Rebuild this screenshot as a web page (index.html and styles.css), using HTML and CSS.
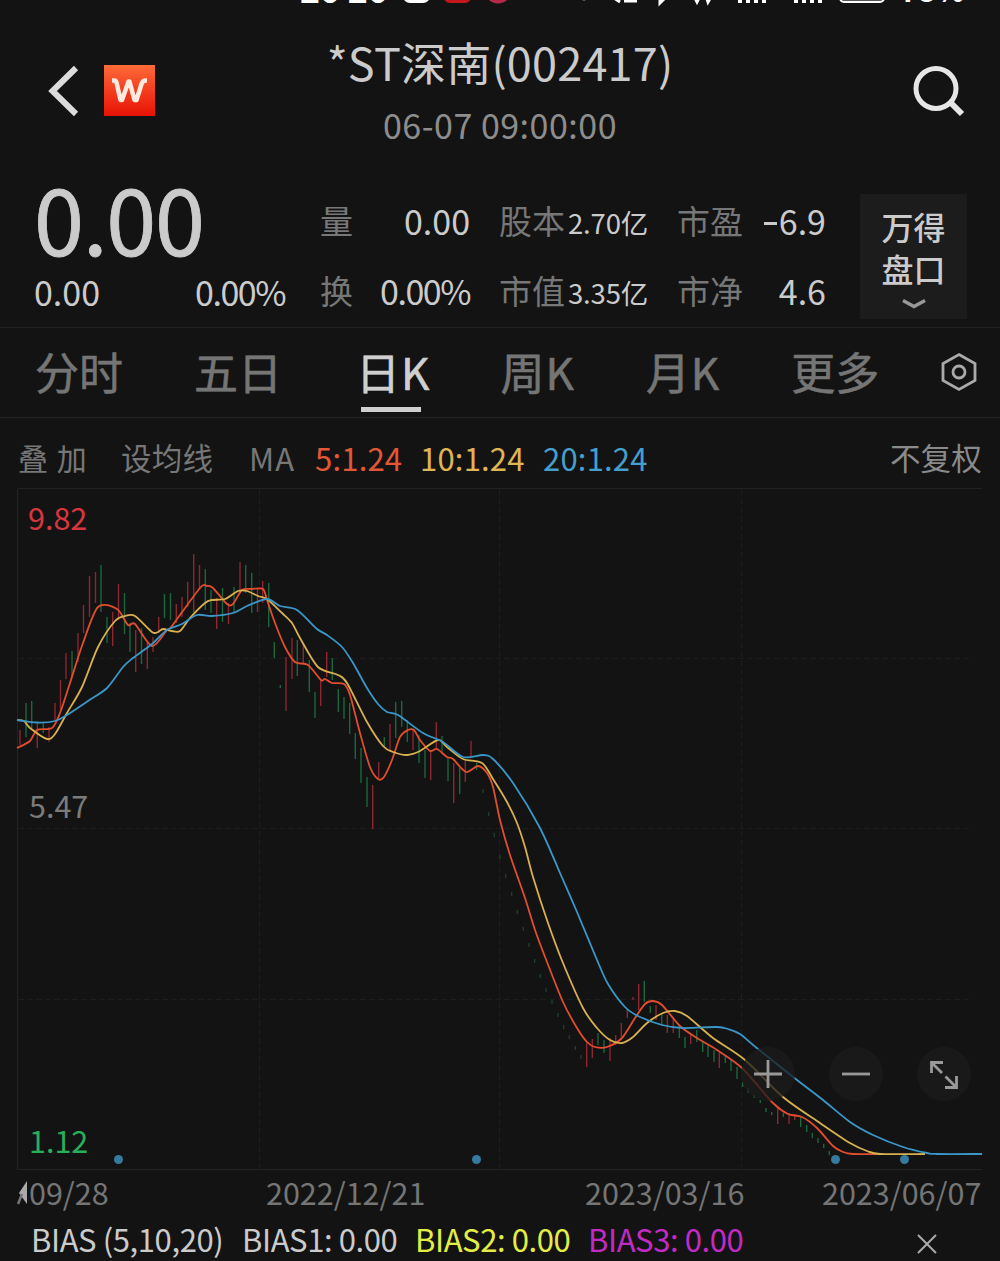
FILE: index.html
```html
<!DOCTYPE html>
<html lang="zh-CN">
<head>
  <meta charset="UTF-8" />
  <meta name="viewport" content="width=device-width, initial-scale=1.0"/>
  <title>*ST深南(002417)</title>
  <link rel="stylesheet" href="styles.css">
</head>
<body>

<div class="status-bar">
  <span class="status-time">20 20</span>
  <svg class="status-icons" width="500" height="8" viewBox="400 0 500 8">
    <rect x="403" y="-16" width="27" height="19" rx="7" fill="#fff"/>
    <rect x="444" y="-16" width="27" height="19" rx="6" fill="#c4161c"/>
    <circle cx="498" cy="-10" r="13.5" fill="#b52a4a"/>
    <circle cx="584" cy="-4" r="4.5" fill="#bbb"/>
    <path d="M614-2l6 4M624 1h13M660-4v7l6-6M694-4l3 6 3-6M706-4l2 6 4-7" fill="none" stroke="#fff" stroke-width="3"/>
    <path d="M740-5v8M748-5v8M756-5v8M764-5v8M796-5v8M804-5v8M812-5v8M820-5v8" stroke="#fff" stroke-width="4"/>
    <rect x="840" y="-16" width="44" height="18" rx="4" fill="#555" stroke="#fff" stroke-width="2"/>
  </svg>
  <span class="status-battery">78%</span>
</div>

<div class="header">
  <div class="header-left">
    <svg class="back" width="32" height="52" viewBox="0 0 32 52"><path d="M28 3L4.500 26 28 49" fill="none" stroke="#dcdcdc" stroke-width="6"/></svg>
    <div class="logo"><svg width="51" height="51" viewBox="0 0 51 51"><path d="M8 15.500h2.500q1.500 0 2 2l4 17.500h1.500l6.500-18.500h1l5 18.500h2l5-16q1-3.500 4.500-3.500h1" fill="none" stroke="#ffeadf" stroke-width="4.500" stroke-linejoin="round"/></svg></div>
  </div>
  <div class="header-title">
    <h1>*ST深南(002417)</h1>
    <div class="time">06-07 09:00:00</div>
  </div>
  <svg class="search" width="54" height="54" viewBox="0 0 54 54"><g fill="none" stroke="#e6e6e6"><circle cx="24" cy="23.500" r="20" stroke-width="5"/><path d="M38 37l12 12" stroke-width="6"/></g></svg>
</div>

<div class="quote">
  <div class="price">
    <div class="price-now">0.00</div>
    <div class="price-change"><span>0.00</span><span class="percent">0.00%</span></div>
  </div>
  <div class="stats">
    <div class="stat stat-a"><span class="label">量</span><span>0.00</span></div>
    <div class="stat stat-b"><span class="label">股本</span><span class="small">2.70亿</span></div>
    <div class="stat stat-c"><span class="label">市盈</span><span><i class="minus"></i>6.9</span></div>
    <div class="stat stat-a"><span class="label">换</span><span class="percent">0.00%</span></div>
    <div class="stat stat-b"><span class="label">市值</span><span class="small">3.35亿</span></div>
    <div class="stat stat-c"><span class="label">市净</span><span>4.6</span></div>
  </div>
  <div class="depth">
    <span>万得</span>
    <span>盘口</span>
    <svg width="26" height="12" viewBox="0 0 26 12"><path d="M2 2.500l11 6 11-6" fill="none" stroke="#999" stroke-width="3.500"/></svg>
  </div>
</div>

<div class="tabs">
  <span class="tab">分时</span>
  <span class="tab">五日</span>
  <span class="tab tab-k active">日K</span>
  <span class="tab tab-k">周K</span>
  <span class="tab tab-k">月K</span>
  <span class="tab">更多</span>
  <svg class="gear" width="36" height="40" viewBox="0 0 36 40"><g fill="none" stroke="#aaa" stroke-width="2.800"><path d="M18 2.500l16 9v17l-16 9-16-9v-17z"/><circle cx="18" cy="20" r="6"/></g></svg>
</div>

<div class="ma-row">
  <span class="overlay">叠 加</span>
  <span class="set-ma">设均线</span>
  <span class="ma">MA</span>
  <span class="ma5">5:1.24</span>
  <span class="ma10">10:1.24</span>
  <span class="ma20">20:1.24</span>
  <span class="adjust">不复权</span>
</div>

<div class="chart">
  <svg id="kline" width="1000" height="683" viewBox="0 488 1000 683">
    <g class="grid">
      <path class="frame" d="M982 488.500H17.500V1169.500H982"/>
      <path d="M259.500 489V1169M499.500 489V1169M741.500 489V1169M18 658.500H972M18 828.500H972M18 999.500H972"/>
    </g>
    <g id="candles"></g>
    <g id="lines"></g>
    <g fill="#347b9f">
      <circle cx="118.500" cy="1159.500" r="4.500"/>
      <circle cx="476.500" cy="1159.500" r="4.500"/>
      <circle cx="835.500" cy="1159.500" r="4.500"/>
      <circle cx="904.500" cy="1159.500" r="4.500"/>
    </g>
    <g class="axis">
      <text x="28" y="530" fill="#d8363f">9.82</text>
      <text x="29" y="818" fill="#7b7b7b">5.47</text>
      <text x="29" y="1153" fill="#29ae5b">1.12</text>
    </g>
  </svg>
  <div class="zoom-buttons">
    <div class="zoom-btn"><svg width="54" height="54" viewBox="0 0 54 54"><path d="M13 27h28M27 13v28"/></svg></div>
    <div class="zoom-btn"><svg width="54" height="54" viewBox="0 0 54 54"><path d="M13 27h28"/></svg></div>
    <div class="zoom-btn"><svg width="54" height="54" viewBox="0 0 54 54"><path d="M14.500 26V15.500H26M15 16L25 26M28.500 29.500L39 40M39.500 29v11.500H28"/></svg></div>
  </div>
</div>

<div class="dates">
  <span class="date-first">09/28<svg width="12" height="24" viewBox="0 0 12 24"><path d="M10 0v23L2 12z" fill="#aaa"/><path d="M1 23l4-10" stroke="#777" stroke-width="2.500"/></svg></span>
  <span class="date-second">2022/12/21</span>
  <span class="date-third">2023/03/16</span>
  <span>2023/06/07</span>
</div>

<div class="bias">
  <span class="bias-name">BIAS (5,10,20)</span>
  <span>BIAS1: 0.00</span>
  <span class="bias2">BIAS2: 0.00</span>
  <span class="bias3">BIAS3: 0.00</span>
  <svg width="20" height="20" viewBox="0 0 20 20"><path d="M1 1l18 18M19 1L1 19" stroke="#aaa" stroke-width="2"/></svg>
</div>

<script src="script.js"></script>
</body>
</html>
```
FILE: styles.css
```css
html, body {
  margin: 0;
  padding: 0;
  background: #131313;
  color: #cbcbcb;
  font-family: 'Noto Sans CJK SC', sans-serif;
}

body {
  width: 1000px;
  height: 1261px;
  overflow: hidden;
}

span, h1 {
  white-space: nowrap;
}

svg {
  display: block;
  flex: none;
}

/* status bar, scrolled almost out of view */
.status-bar {
  display: flex;
  height: 8px;
  padding-left: 300px;
  overflow: hidden;
  color: #fff;
  font-size: 34px;
  font-weight: 700;
  line-height: 34px;
}

.status-bar span {
  margin-top: -28px;
}

.status-time {
  width: 100px;
}

.status-battery {
  font-size: 30px;
}

.header {
  display: flex;
  height: 157px;
}

.header-left {
  display: flex;
  width: 232px;
  padding: 57px 0 0 48px;
}

.back {
  margin-right: 24px;
}

.logo {
  width: 51px;
  height: 51px;
  background: linear-gradient(#ff6a38, #e81206);
}

.header-title {
  width: 440px;
  text-align: center;
}

h1 {
  margin: 21px 0 0;
  font-size: 45px;
  font-weight: 400;
  line-height: 66px;
  letter-spacing: 0.2px;
}

.time {
  margin-top: 5px;
  color: #8d8d8d;
  font-size: 34px;
  line-height: 50px;
  letter-spacing: 0.5px;
}

.search {
  margin: 57px 34px 0 auto;
}

.quote {
  display: flex;
  height: 162px;
  border-bottom: 1px solid #222;
}

.price {
  width: 251px;
  padding-left: 34px;
}

.price-now {
  height: 103px;
  font-size: 90px;
  line-height: 105px;
  letter-spacing: -1.3px;
  -webkit-text-stroke: 0.8px;
}

.price-change {
  display: flex;
  justify-content: space-between;
  font-size: 34px;
  line-height: 47px;
}

.percent {
  letter-spacing: -1.5px;
}

.stats {
  display: grid;
  grid-template-columns: 150px 149px 149px;
  grid-template-rows: 70px 70px;
  column-gap: 29px;
  width: 506px;
  margin: 20px 0 0 35px;
}

.stat {
  display: flex;
  justify-content: space-between;
  font-size: 34px;
  line-height: 72px;
}

.label {
  color: #777;
  font-size: 33px;
  line-height: 70px;
}

.stat .small {
  font-size: 27.5px;
  line-height: 75px;
  letter-spacing: -0.2px;
}

.minus {
  display: inline-block;
  width: 13px;
  height: 3px;
  margin-right: 2px;
  background: #cbcbcb;
  vertical-align: 10px;
}

.depth {
  display: flex;
  flex-direction: column;
  align-items: center;
  width: 107px;
  height: 114px;
  margin: 29px 0 0 34px;
  padding-top: 11px;
  background: #1c1c1c;
  font-size: 32px;
  font-weight: 500;
  line-height: 42px;
}

.depth svg {
  margin-top: 9px;
}

.tabs {
  display: flex;
  height: 89px;
  padding-left: 35px;
  border-bottom: 1px solid #222;
  color: #757575;
  font-size: 44px;
  line-height: 87px;
  -webkit-text-stroke: 0.6px;
}

.tab {
  position: relative;
  margin-right: 71px;
}

.tab-k {
  letter-spacing: 1px;
}

.tab.active {
  margin: 0 70px 0 3px;
  color: #cfcfcf;
}

.tab.active::after {
  content: "";
  position: absolute;
  left: 5px;
  bottom: 5px;
  width: 60px;
  height: 5px;
  background: #cfcfcf;
}

.gear {
  margin: 24px 0 0 -9px;
}

.ma-row {
  display: flex;
  height: 70px;
  padding: 0 18px;
  color: #777;
  font-size: 31px;
  line-height: 79px;
  letter-spacing: 0.2px;
}

.overlay {
  width: 103px;
  font-size: 30px;
  letter-spacing: 1px;
}

.set-ma {
  width: 128px;
  font-size: 30.5px;
}

.ma {
  width: 66px;
  letter-spacing: 1px;
}

.ma5 {
  width: 105px;
  color: #e25836;
}

.ma10 {
  width: 123px;
  color: #e0b554;
}

.ma20 {
  color: #459fcc;
}

.adjust {
  margin-left: auto;
  color: #8a8a8a;
  font-size: 30.5px;
}

.chart {
  position: relative;
  height: 683px;
}

.grid path {
  fill: none;
  stroke: #1d1d1d;
  stroke-dasharray: 6 3;
}

.grid .frame {
  stroke: #232323;
  stroke-dasharray: none;
}

.axis {
  font-size: 30.5px;
}

/* sits over the lower right of the chart */
.zoom-buttons {
  position: absolute;
  right: 29px;
  top: 559px;
  display: flex;
  gap: 34px;
}

.zoom-btn {
  width: 54px;
  height: 54px;
  border-radius: 50%;
  background: rgba(28, 28, 28, 0.75);
}

.zoom-btn path {
  fill: none;
  stroke: #999;
  stroke-width: 2.8;
}

.dates {
  display: flex;
  height: 47px;
  padding: 0 18px 0 29px;
  color: #757575;
  font-size: 30.5px;
  line-height: 43px;
}

.date-first {
  position: relative;
  width: 237px;
}

.date-first svg {
  position: absolute;
  left: -12px;
  top: 10px;
}

.date-second {
  width: 319px;
}

.date-third {
  width: 237px;
}

.bias {
  display: flex;
  height: 43px;
  padding-left: 31px;
  font-size: 31px;
  line-height: 41px;
  letter-spacing: -0.4px;
}

.bias span {
  width: 173px;
}

.bias .bias-name {
  width: 211px;
}

.bias .bias2 {
  color: #e3ee45;
}

.bias .bias3 {
  color: #c22ac4;
}

.bias svg {
  margin: 16px 0 0 156px;
}
```
FILE: script.js
```js
// x, high, low, colour
const candles = [
  [20,730,745,"r"],[26,703,737,"g"],[31.7,701,728,"g"],[37.3,723,748,"r"],[43.3,723,733,"g"],[49,727,742,"r"],
  [55,703,720,"r"],[60.5,680,710,"r"],[66,653,679,"r"],[72,651,677,"g"],[78,633,662,"r"],[83.5,605,633,"r"],
  [89.5,576,617,"r"],[95.5,572,603,"r"],[101,565,612,"g"],[107,617,643,"g"],[112.7,612,646,"r"],[118.5,584,620,"r"],
  [124.5,593,634,"g"],[130,623,652,"g"],[135.7,630,672,"r"],[141.5,628,664,"g"],[147.3,643,669,"r"],[153,637,652,"r"],
  [158.7,617,633,"r"],[164.5,594,618,"g"],[170.5,593,620,"g"],[176.3,604,623,"r"],[182,597,617,"r"],[187.7,582,607,"r"],
  [193.7,554,612,"r"],[199.5,565,590,"r"],[205.3,569,610,"g"],[211,590,613,"g"],[216.7,598,629,"r"],[222.5,588,622,"g"],
  [228.5,603,624,"r"],[234,587,613,"g"],[240,562,593,"r"],[245.7,565,593,"g"],[251.7,573,613,"g"],[257.5,588,612,"r"],
  [262.7,581,603,"r"],[268.7,583,627,"g"],[274.3,642,658,"g"],[280.3,685,688,"g"],[286,657,711,"r"],[292,638,679,"r"],
  [297.3,640,676,"g"],[303.3,643,664,"r"],[309.3,660,692,"g"],[315,692,718,"g"],[320.7,679,706,"r"],[326.7,652,677,"r"],
  [332.3,658,680,"g"],[338.3,689,712,"g"],[344,697,719,"g"],[349.7,703,734,"g"],[355.3,733,759,"g"],[361,748,783,"g"],
  [367,777,807,"g"],[372.7,785,829,"r"],[378.7,762,778,"r"],[384.3,737,747,"g"],[390,724,752,"r"],[395.7,702,738,"g"],
  [401.7,701,727,"g"],[407.3,720,742,"g"],[413,730,750,"r"],[419,735,763,"g"],[425,750,778,"g"],[430.7,750,780,"r"],
  [436.3,722,750,"r"],[442,736,752,"g"],[448,757,781,"g"],[453.7,763,803,"r"],[459.7,768,794,"g"],[465.3,760,782,"r"],
  [471,741,757,"r"],[476.7,763,770,"g"],
  [586.7,1043,1067,"r"],[592.3,1039,1058,"r"],[598,1033,1045,"g"],[604,1040,1053,"g"],[610,1038,1061,"r"],[615.7,1035,1045,"r"],
  [621.3,1023,1037,"r"],[627.3,1010,1018,"r"],[633,997,1000,"r"],[638.7,984,1010,"r"],[644.3,981,1002,"g"],[650.3,1006,1013,"g"],
  [656,1005,1020,"r"],[661.7,1013,1025,"g"],[667.3,1015,1033,"r"],[673.3,1017,1033,"r"],[679.3,1028,1038,"g"],[685,1037,1048,"g"],
  [690.7,1033,1044,"r"],[696.7,1030,1042,"g"],[702.7,1042,1052,"g"],[708,1045,1057,"g"],[714,1050,1062,"g"],[719.3,1053,1068,"r"],
  [725.3,1056,1063,"g"],[731,1060,1071,"g"],[737,1067,1079,"g"],[742.7,1082,1087,"g"],[748.3,1088,1093,"g"],[754.3,1095,1098,"g"],
  [760.3,1100,1103,"g"],[766,1108,1112,"g"],[771.7,1112,1115,"g"],[777.7,1107,1124,"r"],[783.3,1113,1117,"g"],[789,1113,1124,"r"],
  [794.7,1114,1120,"r"],[800.7,1117,1127,"g"],[806.7,1125,1132,"g"],[812.3,1133,1138,"g"],[818,1138,1143,"g"],[823.7,1144,1148,"g"],
  [829.3,1151,1155,"g"]
];

// one-price limit days
const limitDays = [
  [483,791],[488.7,814],[494.3,835],[500,857],[505.7,876],[511.7,894],[517.3,912],[523.3,929],[529,945],
  [534.7,961],[540.3,976],[546,990],[552,1002],[558,1015],[563.7,1027],[569.3,1037],[575.3,1048],[581,1057]
];

const averages = {
  "#3a97c8": [17,720, 37,722.5, 55,721, 67,715, 88,701, 107,688, 123,667, 133,658, 152,644, 167,630, 182,624, 197,615, 212,616,
    233,613, 247,606, 267,599, 280,606, 297,610, 317,629, 327,635, 342,647, 353,663, 367,688, 378,704, 387,712, 398,715,
    423,733, 443,742, 463,757, 483,755, 493,759, 513,783, 540,828, 560,873, 577,912, 597,960, 608,984, 625,1007, 638,1016,
    662,1025, 683,1028, 717,1027, 728,1029, 740,1034, 758,1049, 797,1080, 823,1100, 850,1122, 873,1135, 903,1147, 927,1153,
    937,1154, 982,1154],
  "#d9b04f": [17,720, 24,721, 30,728, 47,739, 55,734, 67,713, 82,687, 98,647, 115,621, 125,616, 135,616, 152,632, 158,632,
    163,629, 172,631, 180,631, 190,618, 205,603, 212,600, 225,599, 238,591, 247,591, 258,596, 267,599, 282,613, 292,623,
    300,638, 318,667, 338,675, 347,683, 367,722, 383,746, 393,752, 407,755, 420,751, 438,740, 447,747, 463,759, 482,763,
    493,779, 507,802, 517,823, 525,847, 533,877, 548,923, 563,963, 583,1008, 597,1028, 610,1040, 622,1043, 633,1037,
    647,1023, 663,1013, 675,1011, 687,1016, 713,1038, 745,1060, 783,1097, 820,1123, 850,1143, 867,1151, 880,1154, 925,1154],
  "#e04e2e": [17,748, 30,741, 37,730, 52,728, 60,713, 70,683, 83,643, 98,607, 117,609, 128,625, 135,624, 152,646, 167,630,
    172,626, 200,588, 207,586, 213,588, 227,604, 233,604, 242,590, 252,589, 263,589, 267,600, 275,623, 285,647, 295,662,
    308,665, 321,680, 325,679, 332,683, 344,684, 350,695, 360,733, 370,767, 378,779, 384,777, 392,760, 400,737, 408,730,
    414,730, 420,740, 430,751, 437,749, 447,757, 453,759, 466,772, 478,766, 487,773, 493,787, 500,820, 510,855, 525,898,
    535,930, 547,962, 563,1002, 577,1028, 587,1042, 595,1047, 607,1047, 622,1038, 635,1018, 645,1004, 653,1001, 662,1005,
    680,1026, 697,1038, 717,1050, 742,1068, 773,1103, 788,1114, 802,1117, 817,1128, 833,1146, 843,1152, 853,1154, 880,1154]
};

function smooth(p) {
  const n = p.length / 2;
  const at = i => {
    i = Math.max(0, Math.min(n - 1, i));
    return [p[i * 2], p[i * 2 + 1]];
  };
  let d = `M${p[0]} ${p[1]}`;
  for (let i = 0; i < n - 1; i++) {
    const [a, b, c, e] = [at(i - 1), at(i), at(i + 1), at(i + 2)];
    d += `C${b[0] + (c[0] - a[0]) / 7} ${b[1] + (c[1] - a[1]) / 7} ${c[0] - (e[0] - b[0]) / 7} ${c[1] - (e[1] - b[1]) / 7} ${c[0]} ${c[1]}`;
  }
  return d;
}

const colors = { r: "#8c2630", g: "#1b673d" };

document.getElementById("candles").innerHTML =
  candles.map(([x, y1, y2, c]) => `<path d="M${x} ${y1}V${y2}" stroke="${colors[c]}" stroke-width="1.4"/>`).join("") +
  limitDays.map(([x, y]) => `<path d="M${x} ${y - 2}v4" stroke="#20452f" stroke-width="1.2"/>`).join("");

document.getElementById("lines").innerHTML = Object.entries(averages).reverse()
  .map(([color, p]) => `<path d="${smooth(p)}" fill="none" stroke="${color}" stroke-width="1.8"/>`).join("");
```
